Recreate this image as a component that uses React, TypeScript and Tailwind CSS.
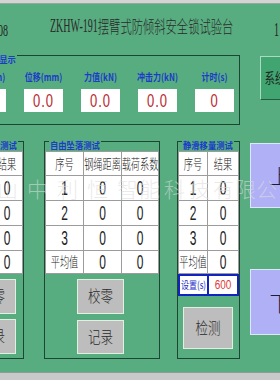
import React from "react";

const NUM = "font-['Liberation_Sans',sans-serif]";

function V({ children, className = "" }: { children: React.ReactNode; className?: string }) {
  return <span className={`inline-block whitespace-nowrap ${className}`}>{children}</span>;
}

function Hd({ t }: { t: string }) {
  return <V className="text-[9.2px] font-light leading-none scale-y-[1.45] text-[#222]">{t}</V>;
}

function Num({ t }: { t: string }) {
  return <V className={`${NUM} text-[12px] leading-none scale-y-[1.7] text-[#222]`}>{t}</V>;
}

type Row = { cells: string[]; h: string; head?: boolean };

function Grid({ widths, rows }: { widths: string[]; rows: Row[] }) {
  return (
    <div className="flex flex-col border-t border-[#9c9c9c] bg-white">
      {rows.map((r, i) => (
        <div key={i} className={`flex ${r.h}`}>
          {r.cells.map((c, j) => (
            <div
              key={j}
              className={`${widths[j]} shrink-0 flex items-center justify-center border-b border-r border-[#9c9c9c] ${j === 0 ? "border-l" : ""}`}
            >
              {r.head || /[^0-9]/.test(c) ? <Hd t={c} /> : <Num t={c} />}
            </div>
          ))}
        </div>
      ))}
    </div>
  );
}

function Legend({ t, className }: { t: string; className: string }) {
  return (
    <div className={`absolute top-[-6px] px-[1px] bg-[#58ad80] leading-[10px] ${className}`}>
      <V className="text-[8.3px] font-bold text-[#1a3cc8] scale-y-[1.15]">{t}</V>
    </div>
  );
}

function GreyBtn({ t, className }: { t: string; className: string }) {
  return (
    <div className={`shrink-0 flex items-center justify-center bg-[#bdbdbd] border border-[#e2f0e2] ${className}`}>
      <V className="text-[12.5px] font-light leading-none scale-y-[1.25] text-[#2a2a2a]">{t}</V>
    </div>
  );
}

function Measure({ label, value }: { label: string; value: string }) {
  return (
    <div className="w-[39px] shrink-0 flex flex-col items-center">
      <div className="h-[12px] flex items-center">
        <V className="text-[8px] font-bold leading-none scale-y-[1.25] text-[#1a3cc8]">{label}</V>
      </div>
      <div className="mt-[6px] h-[23px] w-[39px] bg-white flex items-center justify-center">
        <V className={`${NUM} text-[13px] tracking-[1px] leading-none scale-y-[1.45] text-[#b8282e]`}>{value}</V>
      </div>
    </div>
  );
}

const headRow = (a: string, b: string, c?: string): Row => ({ cells: c ? [a, b, c] : [a, b], h: "h-[24px]", head: true });

export default function App() {
  const smallRows: Row[] = [
    headRow("序号", "结果"),
    { cells: ["1", "0"], h: "h-[25px]" },
    { cells: ["2", "0"], h: "h-[25px]" },
    { cells: ["3", "0"], h: "h-[25px]" },
    { cells: ["平均值", "0"], h: "h-[23px]" },
  ];
  const midRows: Row[] = [
    headRow("序号", "钢绳距离", "载荷系数"),
    { cells: ["1", "0", "0"], h: "h-[25px]" },
    { cells: ["2", "0", "0"], h: "h-[25px]" },
    { cells: ["3", "0", "0"], h: "h-[25px]" },
    { cells: ["平均值", "0", "0"], h: "h-[23px]" },
  ];

  return (
    <div className="relative w-[280px] h-[380px] overflow-hidden bg-[#58ad80] flex flex-col font-['Noto_Sans_CJK_SC',sans-serif]">
      {/* top strip */}
      <div className="h-[4px] shrink-0 bg-[#d4d4d4] border-b border-[#93ab9b]" />

      {/* title row */}
      <div className="h-[43px] shrink-0 flex items-center pt-[2px]">
        <div className="w-[52px] -ml-[2px] shrink-0">
          <V className="font-['Liberation_Serif',serif] text-[10px] leading-none scale-y-[1.6] text-[#222]">08</V>
        </div>
        <div className="flex items-center">
          <V className="font-['Liberation_Serif',serif] text-[10px] leading-none scale-y-[1.9] text-[#2a2a2a]">ZKHW-191</V>
          <V className="text-[11.3px] font-light leading-none scale-y-[1.55] text-[#2a2a2a]">摆臂式防倾斜安全锁试验台</V>
        </div>
        <div className="ml-auto w-[6px] shrink-0">
          <V className="font-['Liberation_Serif',serif] text-[10px] leading-none scale-y-[1.8] text-[#222]">1</V>
        </div>
      </div>

      {/* display row */}
      <div className="mt-[8px] shrink-0 flex items-start">
        <div className="relative -ml-[45px] w-[285px] h-[70px] shrink-0 border border-[#1d4632] pl-[11px] pt-[15px]">
          <Legend t="实时数据显示" className="left-[9px]" />
          <div className="flex gap-[18px]">
            <Measure label="速度(mm)" value="0.0" />
            <Measure label="位移(mm)" value="0.0" />
            <Measure label="力值(kN)" value="0.0" />
            <Measure label="冲击力(kN)" value="0.0" />
            <Measure label="计时(s)" value="0" />
          </div>
        </div>
        <div className="ml-[20px] mt-[1px] w-[30px] h-[44px] shrink-0 flex items-center justify-center bg-[#40a571] border-t border-l border-[#a8dcc0] border-b border-r border-b-[#245c40] border-r-[#245c40]">
          <V className="text-[10.5px] leading-none scale-y-[1.3] text-[#1e2a22]">系统</V>
        </div>
      </div>

      {/* test groups row */}
      <div className="mt-[16px] shrink-0 flex items-start">
        {/* left group */}
        <div className="relative -ml-[39px] w-[63px] h-[218px] shrink-0 border border-[#1d4632] pt-[9px]">
          <Legend t="自锁性能测试" className="left-[4px]" />
          <Grid widths={["w-[30px]", "w-[31px]"]} rows={smallRows} />
          <GreyBtn t="校零" className="mt-[5px] ml-[7px] w-[47px] h-[35px]" />
          <GreyBtn t="记录" className="mt-[5px] ml-[7px] w-[47px] h-[35px]" />
        </div>

        {/* middle group */}
        <div className="relative ml-[20px] w-[116px] h-[218px] shrink-0 border border-[#1d4632] pt-[9px]">
          <Legend t="自由坠落测试" className="left-[4px]" />
          <Grid widths={["w-[39px]", "w-[38px]", "w-[37px]"]} rows={midRows} />
          <GreyBtn t="校零" className="mt-[5px] ml-[32px] w-[47px] h-[35px]" />
          <GreyBtn t="记录" className="mt-[6px] ml-[32px] w-[47px] h-[34px]" />
        </div>

        {/* right group */}
        <div className="relative ml-[17px] w-[63px] h-[218px] shrink-0 border border-[#1d4632] pt-[9px]">
          <Legend t="静滑移量测试" className="left-[4px]" />
          <Grid widths={["w-[30px]", "w-[31px]"]} rows={smallRows} />
          <div className="flex h-[22px] border-2 border-[#1224c0] bg-white">
            <div className="w-[29px] shrink-0 flex items-center justify-center border-r-2 border-[#1224c0]">
              <V className="text-[8px] leading-none scale-y-[1.3] text-[#1a2cc8]">设置(s)</V>
            </div>
            <div className="flex-1 flex items-center justify-center">
              <V className={`${NUM} text-[10px] leading-none scale-y-[1.35] text-[#e2383a]`}>600</V>
            </div>
          </div>
          <GreyBtn t="检测" className="mt-[11px] ml-[5px] w-[50px] h-[42px]" />
        </div>

        {/* up / down */}
        <div className="ml-[10px] w-[60px] shrink-0 flex flex-col">
          <div className="mt-[2px] h-[65px] flex items-center justify-center bg-[#b0b0f6] border border-[#dce8f4]">
            <span className="text-[21px] font-light leading-none text-[#1c1c3a]">上</span>
          </div>
          <div className="mt-[61px] h-[66px] flex items-center justify-center bg-[#b0b0f6] border border-[#dce8f4]">
            <span className="text-[21px] font-light leading-none text-[#1c1c3a]">下</span>
          </div>
        </div>
      </div>

      {/* bottom band */}
      <div className="mt-auto h-[8px] shrink-0 bg-[#c9c9c9] border-t border-[#8f9c94]" />

      {/* watermark */}
      <div className="pointer-events-none absolute left-[-3px] top-[178px] flex text-[21px] leading-none font-light text-[#dcdcdc]/60 whitespace-nowrap">
        <span className="w-[30px] shrink-0">山</span>
        <span className="w-[30px] shrink-0">中</span>
        <span className="w-[30px] shrink-0">利</span>
        <span className="w-[30px] shrink-0">恒</span>
        <span className="w-[22px] shrink-0">智</span>
        <span className="w-[25px] shrink-0">能</span>
        <span className="w-[25px] shrink-0">科</span>
        <span className="w-[24px] shrink-0">技</span>
        <span className="w-[22px] shrink-0">有</span>
        <span className="w-[21px] shrink-0">限</span>
        <span className="w-[24px] shrink-0">公</span>
        <span className="w-[24px] shrink-0">司</span>
      </div>
    </div>
  );
}
